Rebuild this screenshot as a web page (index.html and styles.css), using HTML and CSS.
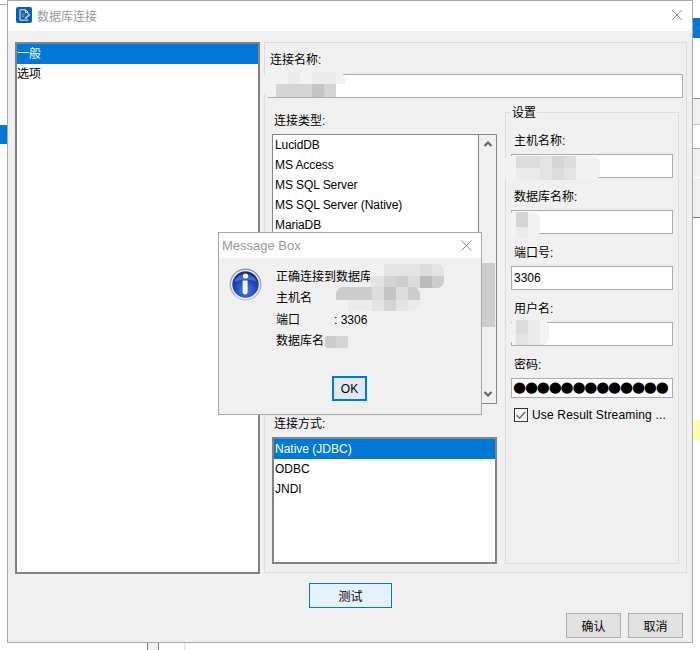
FILE: index.html
```html
<!DOCTYPE html>
<html lang="zh">
<head>
<meta charset="utf-8">
<title>数据库连接</title>
<link rel="stylesheet" href="styles.css">
</head>
<body>
<div class="desktop">
  <div class="bg bg-tick"></div>
  <div class="bg bg-topline"></div>
  <div class="bg bg-blue-left"></div>
  <div class="bg bg-blue-right"></div>
  <div class="bg bg-row-a"></div>
  <div class="bg bg-row-b"></div>
  <div class="bg bg-row-c"></div>
  <div class="bg bg-yellow"></div>
  <div class="bg bg-foot-a"></div>
  <div class="bg bg-foot-b"></div>

  <section class="window">
    <header class="titlebar">
      <svg class="app-icon" width="16" height="16" viewBox="0 0 16 16">
        <rect width="16" height="16" rx="2" fill="#0f5fa8"/>
        <path d="M4 2.8h5.6l2.4 2.4v2M12 12.6v.6H4V2.8M9.4 3v2.4H12" fill="none" stroke="#e4eef7" stroke-width="1"/>
        <path d="M5.6 6.4h3.6v1.2H5.6zM5.6 8.6h2.6v1.2H5.6z" fill="#7fb0dc"/>
        <path d="M8.6 12.4l.5-2 4-4 1.4 1.4-4 4z" fill="#a9c9e6"/>
      </svg>
      <span class="window-title">数据库连接</span>
      <svg class="close" width="10" height="10" viewBox="0 0 10 10"><path d="M0 0l10 10M10 0L0 10" stroke="#8c8c8c" stroke-width="1" fill="none"/></svg>
    </header>
    <div class="window-body">
      <div class="main-row">
        <ul class="list side-list">
          <li class="selected">一般</li>
          <li>选项</li>
        </ul>
        <div class="panel">
          <label class="label name-label">连接名称:</label>
          <div class="input name-input"></div>
          <div class="columns">
            <div class="left-col">
              <label class="label col-label type-label">连接类型:</label>
              <div class="type-box">
                <ul class="type-list">
                  <li>LucidDB</li>
                  <li>MS Access</li>
                  <li>MS SQL Server</li>
                  <li>MS SQL Server (Native)</li>
                  <li>MariaDB</li>
                </ul>
                <div class="scrollbar">
                  <svg width="10" height="6" viewBox="0 0 10 6"><path d="M1.5 5L5 1.5 8.5 5" fill="none" stroke="#606060" stroke-width="2"/></svg>
                  <div class="thumb"></div>
                  <svg width="10" height="6" viewBox="0 0 10 6"><path d="M1.5 1L5 4.5 8.5 1" fill="none" stroke="#606060" stroke-width="2"/></svg>
                </div>
              </div>
              <label class="label col-label method-label">连接方式:</label>
              <ul class="list method-list">
                <li class="selected">Native (JDBC)</li>
                <li>ODBC</li>
                <li>JNDI</li>
              </ul>
            </div>
            <div class="settings">
              <div class="legend">设置</div>
              <div class="field"><label class="label">主机名称:</label><div class="input"></div></div>
              <div class="field"><label class="label">数据库名称:</label><div class="input"></div></div>
              <div class="field"><label class="label">端口号:</label><div class="input">3306</div></div>
              <div class="field"><label class="label">用户名:</label><div class="input"></div></div>
              <div class="field"><label class="label">密码:</label><div class="input password">●●●●●●●●●●●●●</div></div>
              <div class="check-row">
                <svg class="check" width="14" height="14" viewBox="0 0 14 14">
                  <rect x="0.5" y="0.5" width="13" height="13" fill="#f6f6f6" stroke="#333"/>
                  <path d="M2.6 7.2l3 3 5.6-6.4" fill="none" stroke="#707070" stroke-width="1.5"/>
                </svg>
                <span>Use Result Streaming ...</span>
              </div>
            </div>
          </div>
        </div>
      </div>
      <div class="test-row"><button class="btn btn-test">测试</button></div>
      <div class="action-row">
        <button class="btn">确认</button>
        <button class="btn">取消</button>
      </div>
    </div>
  </section>

  <section class="dialog">
    <header class="dialog-title">
      <span>Message Box</span>
      <svg width="11" height="11" viewBox="0 0 11 11"><path d="M0.5 0.5l10 10M10.5 0.5l-10 10" stroke="#8c8c8c" fill="none"/></svg>
    </header>
    <div class="dialog-body">
      <div class="dialog-content">
        <svg class="info-icon" width="33" height="33" viewBox="0 0 33 33">
          <defs>
            <radialGradient id="disc" cx="50%" cy="72%" r="62%">
              <stop offset="0" stop-color="#4f7df0"/>
              <stop offset="0.55" stop-color="#2350c4"/>
              <stop offset="1" stop-color="#12308c"/>
            </radialGradient>
            <linearGradient id="ring" x1="0" y1="0" x2="0" y2="1">
              <stop offset="0" stop-color="#8b93a3"/>
              <stop offset="1" stop-color="#c9ccd2"/>
            </linearGradient>
          </defs>
          <circle cx="16.5" cy="16.5" r="16" fill="url(#ring)"/>
          <circle cx="16.5" cy="16.5" r="14.4" fill="#f2f3f6"/>
          <circle cx="16.5" cy="16.5" r="13.2" fill="url(#disc)"/>
          <path d="M5 14a12 11 0 0 1 23 0q-11-5-23 0z" fill="#7f9fee" opacity=".45"/>
          <circle cx="16.5" cy="8" r="2.6" fill="#fff"/>
          <path d="M13.6 12.6h5v11.2c0 1.8-.8 2.7-2.5 2.7s-2.5-.9-2.5-2.7z" fill="#f4f6fb"/>
        </svg>
        <div class="message">
          <div>正确连接到数据库</div>
          <div>主机名</div>
          <div><span class="msg-key">端口</span>: 3306</div>
          <div>数据库名:</div>
        </div>
      </div>
      <div class="dialog-actions"><button class="btn btn-ok">OK</button></div>
    </div>
  </section>

  <div class="mosaic m-name"><i class="s1"></i><i class="s1"></i><i class="s2"></i><i class="s1"></i><i class="s2"></i><i class="s2"></i><i class="s1"></i><i class="s1"></i><i class="s5"></i><i class="s5"></i><i class="s5"></i><i class="s7"></i><i class="s5"></i><i class="s0"></i></div>
  <div class="mosaic m-host"><i class="s1"></i><i class="s4"></i><i class="s4"></i><i class="s3"></i><i class="s5"></i><i class="s4"></i><i class="s1"></i><i class="s1"></i><i class="s1"></i><i class="s2"></i><i class="s2"></i><i class="s3"></i><i class="s4"></i><i class="s3"></i><i class="s1"></i><i class="s1"></i></div>
  <div class="mosaic m-db"><i class="s1"></i><i class="s5"></i><i class="s1"></i><i class="s1"></i><i class="s2"></i><i class="s1"></i></div>
  <div class="mosaic m-user"><i class="s1"></i><i class="s4"></i><i class="s2"></i><i class="s1"></i><i class="s1"></i><i class="s3"></i><i class="s2"></i><i class="s1"></i></div>
  <div class="mosaic m-a"><i class="s1"></i><i class="s3"></i><i class="s3"></i><i class="s3"></i><i class="s4"></i><i class="s3"></i><i class="s3"></i><i class="s5"></i><i class="s6"></i><i class="s4"></i><i class="s8"></i><i class="s6"></i></div>
  <div class="mosaic m-b"><i class="s6"></i><i class="s6"></i><i class="s6"></i><i class="s4"></i><i class="s7"></i><i class="s4"></i><i class="s6"></i><i class="s1"></i><i class="s2"></i><i class="s2"></i><i class="s3"></i><i class="s5"></i><i class="s3"></i><i class="s2"></i></div>
  <div class="mosaic m-c"><i class="s6"></i><i class="s5"></i></div>
</div>
</body>
</html>
```

FILE: styles.css
```css
* { box-sizing: border-box; }
html, body { margin: 0; padding: 0; }
body {
  font-family: "Liberation Sans", "Noto Sans CJK SC", sans-serif;
  font-size: 12px;
  color: #000;
  background: #fff;
}
ul { list-style: none; margin: 0; padding: 0; }

.desktop { position: relative; width: 700px; height: 650px; overflow: hidden; background: #fff; }

/* Windows behind the dialog */
.bg { position: absolute; }
.bg-tick { left: 156px; top: 0; width: 1px; height: 1px; background: #555; }
.bg-topline { left: 0; top: 4px; width: 7px; height: 1px; background: #aaa; }
.bg-blue-left { left: 0; top: 125px; width: 7px; height: 19px; background: #0078d7; }
.bg-blue-right { left: 693px; top: 18px; width: 7px; height: 20px; background: #0078d7; }
.bg-row-a { left: 693px; top: 98px; width: 7px; height: 27px; background: #f0f0f0; border-top: 1px solid #8a8a8a; border-bottom: 1px solid #c8c8c8; }
.bg-row-b { left: 693px; top: 148px; width: 7px; height: 29px; background: #f0f0f0; border-top: 1px solid #a8a8a8; }
.bg-row-c { left: 693px; top: 178px; width: 7px; height: 40px; background: #f0f0f0; border-bottom: 1px solid #7a7a7a; }
.bg-yellow { left: 693px; top: 420px; width: 7px; height: 20px; background: #ffffaa; }
.bg-foot-a { left: 147px; top: 643px; width: 12px; height: 7px; background: #f0f0f0; border-left: 1px solid #777; border-right: 1px solid #777; }
.bg-foot-b { left: 184px; top: 643px; width: 1px; height: 7px; background: #ddd; }

/* Main window */
.window {
  position: absolute;
  left: 7px;
  top: 0;
  width: 686px;
  height: 643px;
  display: flex;
  flex-direction: column;
  border: 1px solid #a9a9a9;
  background: #f0f0f0;
}
.titlebar {
  flex: none;
  height: 30px;
  display: flex;
  align-items: center;
  padding: 0 9px 2px 8px;
  background: #fff;
}
.app-icon { flex: none; }
.window-title { margin-left: 5px; color: #9a9a9a; }
.close { margin-left: auto; margin-right: 1px; }
.window-body { flex: 1; display: flex; flex-direction: column; padding: 11px 9px 4px 7px; }
.main-row { display: flex; gap: 4px; align-items: flex-start; }

/* Lists */
.list { border: 2px solid #808488; background: #fff; }
.list li { height: 20px; line-height: 20px; }
.list li.selected { background: #0078d7; color: #fff; }
.side-list { flex: none; width: 245px; height: 532px; }

/* Right panel */
.panel {
  flex: none;
  width: 423px;
  height: 531px;
  margin-right: -2px;
  padding-top: 9px;
  border: 1px solid #dddddd;
}
.label { display: block; height: 16px; line-height: 16px; }
.name-label { margin-left: 5px; margin-bottom: 6px; }
.input {
  height: 24px;
  line-height: 22px;
  padding-left: 2px;
  background: #fff;
  border: 1px solid #a9abb0;
}
.name-input { margin: 0 3px; }
.columns { display: flex; gap: 8px; margin-top: 14px; align-items: flex-start; }
.left-col { flex: none; width: 225px; margin-left: 7px; }
.col-label { margin-left: 2px; margin-bottom: 6px; }
.type-label { padding-top: 1px; height: 17px; margin-bottom: 5px; }
.type-box { display: flex; height: 270px; border: 1px solid #828790; background: #fff; }
.type-list { flex: 1; border-right: 1px solid #828790; letter-spacing: -0.08px; }
.type-list li { height: 20px; line-height: 20px; padding-left: 2px; }
.scrollbar {
  flex: none;
  width: 17px;
  background: #f0f0f0;
  position: relative;
  display: flex;
  flex-direction: column;
  justify-content: space-between;
  align-items: center;
  padding: 6px 0;
}
.thumb { position: absolute; left: 2px; right: 1px; top: 128px; height: 64px; background: #cdcdcd; }
.method-label { margin-top: 12px; margin-bottom: 5px; }
.method-list { height: 127px; }
.method-list li { padding-left: 1px; }

/* Settings group */
.settings { flex: none; width: 174px; height: 452px; border: 1px solid #dddddd; }
.legend { width: fit-content; margin: -8px 0 12px 5px; padding: 0 1px; height: 16px; line-height: 16px; background: #f0f0f0; }
.field { margin-bottom: 11px; }
.field .label { margin-left: 8px; margin-bottom: 5px; }
.field .input { margin-left: 5px; width: 162px; }
.input.password { height: 20px; line-height: 17px; padding-left: 1px; font-family: "DejaVu Sans", sans-serif; font-size: 15px; letter-spacing: -1.2px; white-space: nowrap; }
.check-row { display: flex; align-items: center; gap: 4px; margin-left: 8px; height: 14px; margin-top: -1px; letter-spacing: 0.16px; }
.check { flex: none; }

/* Buttons */
.btn {
  font: inherit;
  color: #000;
  width: 55px;
  height: 25px;
  padding: 0;
  background: #e1e1e1;
  border: 1px solid #adadad;
}
.test-row { padding-left: 294px; margin-top: 9px; }
.btn-test { width: 83px; background: #e5f1fb; border-color: #0078d7; }
.action-row { display: flex; justify-content: flex-end; gap: 7px; margin-top: 5px; }

/* Message dialog */
.dialog {
  position: absolute;
  left: 218px;
  top: 232px;
  width: 264px;
  height: 183px;
  display: flex;
  flex-direction: column;
  border: 1px solid #a9a9a9;
  background: #f0f0f0;
}
.dialog-title {
  flex: none;
  height: 25px;
  display: flex;
  align-items: center;
  justify-content: space-between;
  padding: 0 9px 1px 3px;
  background: #fff;
  color: #999;
  font-size: 13px;
}
.dialog-body { flex: 1; display: flex; flex-direction: column; }
.dialog-content { display: flex; padding: 9px 0 0 10px; }
.info-icon { flex: none; margin-top: 1px; }
.message { margin-left: 14px; line-height: 21.3px; }
.msg-key { display: inline-block; width: 58px; }
.dialog-actions { margin-top: auto; padding-bottom: 13px; display: flex; justify-content: center; }
.btn-ok { width: 35px; border: 2px solid #0078d7; background: #e1e8ef; margin-right: 1px; }

/* Redaction mosaics */
.mosaic { position: absolute; display: grid; overflow: hidden; border-radius: 7px; }
.s0 { background: transparent; }
.s1 { background: #f2f2f2; }
.s2 { background: #ebebeb; }
.s3 { background: #e3e3e3; }
.s4 { background: #dcdcdc; }
.s5 { background: #d4d4d4; }
.s6 { background: #cccccc; }
.s7 { background: #c4c4c4; }
.s8 { background: #bbbbbb; }
.m-name { left: 263px; top: 72px; grid-template-columns: 13px repeat(5, 12px) 9px; grid-template-rows: 12px 13px; }
.m-host { left: 503px; top: 156px; grid-template-columns: 13px repeat(6, 12px) 12px; grid-template-rows: 12px 12px; }
.m-db { left: 507px; top: 212px; grid-template-columns: 9px 12px 12px; grid-template-rows: 15px 11px; }
.m-user { left: 510px; top: 320px; grid-template-columns: 6px 12px 12px 9px; grid-template-rows: 14px 11px; }
.m-a { left: 370px; top: 264px; grid-template-columns: 14px repeat(5, 12px); grid-template-rows: 12px 12px; }
.m-b { left: 336px; top: 287px; grid-template-columns: repeat(7, 12px); grid-template-rows: 13px 11px; }
.m-c { left: 325px; top: 336px; grid-template-columns: 11px 12px; grid-template-rows: 12px; border-radius: 2px; }
```
